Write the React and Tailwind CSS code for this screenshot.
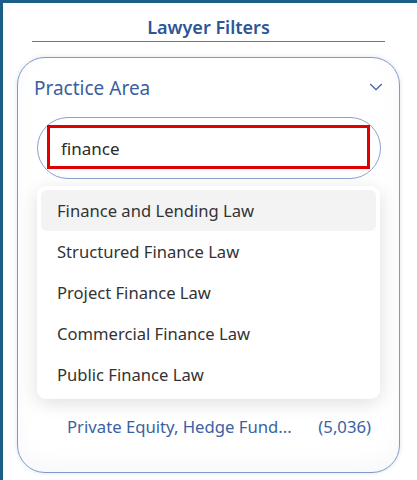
import { ChevronDown } from "lucide-react";

const options = [
  "Finance and Lending Law",
  "Structured Finance Law",
  "Project Finance Law",
  "Commercial Finance Law",
  "Public Finance Law",
];

export default function App() {
  return (
    <div
      className="w-[417px] h-[480px] overflow-hidden bg-white border-l-[3px] border-t-[3px] border-[#1b5f88]"
      style={{ fontFamily: '"Noto Sans", "Open Sans", sans-serif' }}
    >
      {/* Title */}
      <div className="ml-[29px] w-[353px] pt-[12px]">
        <h2 className="text-center text-[18px] leading-[24px] font-semibold text-[#2e5597]">
          Lawyer Filters
        </h2>
        <div className="mt-[2px] h-px bg-[#5b7bb0]" />
      </div>

      {/* Card */}
      <div className="relative ml-[14px] mt-[15px] w-[383px] h-[416px] rounded-[28px] border border-[#7f99c8] shadow-[inset_0_-10px_20px_rgba(120,140,180,0.06),0_0_4px_rgba(120,140,180,0.25)]">
        <div className="flex items-center justify-between pl-[16px] pr-[12px] pt-[17px]">
          <span className="text-[19px] leading-[26px] text-[#3a5fa0]">
            Practice Area
          </span>
          <ChevronDown size={22} strokeWidth={1.2} className="text-[#3a5fa0] -mt-[2px]" />
        </div>

        {/* Search input */}
        <div className="ml-[19px] mt-[16px] w-[344px] h-[62px] rounded-full border border-[#8aa2cf] pt-[7px] pl-[9px]">
          <div className="w-[323px] h-[44px] border-[3px] border-[#e00000] flex items-center pl-[11px] pt-[4px]">
            <span className="text-[17px] text-[#2a2a2a]">finance</span>
          </div>
        </div>

        {/* List below */}
        <div className="mt-[236px] ml-[49px] mr-[28px] flex items-center justify-between text-[16.7px] leading-[24px] text-[#3a62a3]">
          <span>Private Equity, Hedge Fund...</span>
          <span>(5,036)</span>
        </div>

        {/* Dropdown */}
        <div className="absolute left-[19px] top-[128px] w-[343px] rounded-[9px] bg-white p-[4px] shadow-[0_4px_18px_rgba(0,0,0,0.13)]">
          {options.map((o, i) => (
            <div
              key={o}
              className={`h-[41px] flex items-center pl-[16px] pt-[2px] rounded-[6px] text-[16.6px] text-[#333] ${
                i === 0 ? "bg-[#f3f3f3]" : ""
              }`}
            >
              {o}
            </div>
          ))}
        </div>
      </div>
    </div>
  );
}
